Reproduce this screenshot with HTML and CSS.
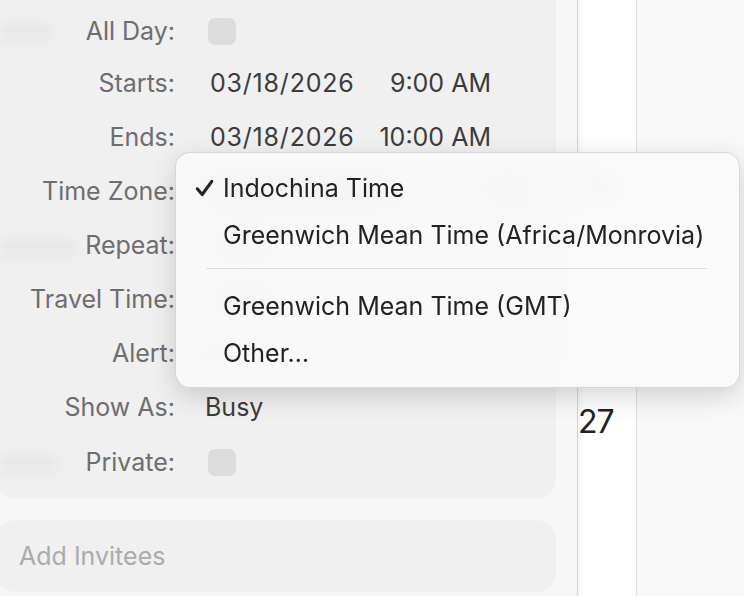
FILE: index.html
```html
<!DOCTYPE html>
<html lang="en">
<head>
    <meta charset="UTF-8">
    <meta name="viewport" content="width=device-width, initial-scale=1.0">
    <title>Event Details</title>
    <link rel="stylesheet" href="styles.css">
</head>
<body>

<!-- Event inspector -->
<div class="sidebar">
    <div class="card details">
        <span class="ghost ghost-1"></span>
        <span class="ghost ghost-2"></span>
        <span class="ghost ghost-3"></span>

        <div class="row row-first">
            <span class="label">All Day:</span>
            <span class="checkbox"></span>
        </div>
        <div class="row">
            <span class="label">Starts:</span>
            <span class="value date">03/18/2026</span>
            <span class="value time">9:00 AM</span>
        </div>
        <div class="row">
            <span class="label">Ends:</span>
            <span class="value date">03/18/2026</span>
            <span class="value time">10:00 AM</span>
        </div>
        <div class="row">
            <span class="label">Time Zone:</span>
            <span class="popup-button"><span class="blur-text wide"></span><span class="stepper"></span></span>
        </div>
        <div class="row">
            <span class="label">Repeat:</span>
            <span class="blur-text short"></span>
        </div>
        <div class="row">
            <span class="label">Travel Time:</span>
            <span class="blur-text short"></span>
        </div>
        <div class="row">
            <span class="label">Alert:</span>
            <span class="popup-small"></span>
        </div>
        <div class="row">
            <span class="label">Show As:</span>
            <span class="value busy">Busy</span>
        </div>
        <div class="row row-last">
            <span class="label">Private:</span>
            <span class="checkbox"></span>
        </div>
    </div>

    <div class="card invitees">
        <span class="placeholder">Add Invitees</span>
    </div>
</div>

<!-- Calendar day column -->
<div class="day-column">
    <span class="day-blur"></span>
    <span class="day-number">27</span>
</div>

<div class="calendar-rest"></div>

<!-- Time zone pop-up menu -->
<div class="menu">
    <div class="menu-item">
        <svg class="check" width="19" height="18" viewBox="0 0 19 18">
            <path d="M2.3 9.8 L7.2 15.5 L16.8 2.3" fill="none" stroke="#222222" stroke-width="3.1" stroke-linecap="round" stroke-linejoin="round"/>
        </svg>
        <span>Indochina Time</span>
    </div>
    <div class="menu-item">
        <span class="check"></span>
        <span>Greenwich Mean Time (Africa/Monrovia)</span>
    </div>
    <div class="menu-separator"></div>
    <div class="menu-item">
        <span class="check"></span>
        <span>Greenwich Mean Time (GMT)</span>
    </div>
    <div class="menu-item">
        <span class="check"></span>
        <span>Other…</span>
    </div>
</div>

</body>
</html>
```

FILE: styles.css
```css
html, body {
    height: 100%;
    margin: 0;
    overflow: hidden;
}

body {
    display: flex;
    background-color: #f7f7f7;
    font-family: Inter, "Noto Sans", sans-serif;
    font-size: 25px;
    color: #3c3c3c;
}

/* Inspector column */
.sidebar {
    width: 578px;
    flex: none;
    display: flex;
    flex-direction: column;
    gap: 21px;
    padding-right: 21px;
    box-sizing: border-box;
    background-color: #f7f7f7;
    border-right: 1px solid #d4d4d4;
    box-shadow: 2px 0 6px rgba(0, 0, 0, 0.05);
    position: relative;
    z-index: 1;
}

.card {
    margin-left: -4px;
    background-color: #f0f0f0;
    border-radius: 20px;
}

.details {
    position: relative;
    margin-top: -20px;
    padding: 26px 0 9px 0;
}

.row {
    display: flex;
    align-items: center;
    height: 54px;
}

.row-first {
    height: 50px;
}

.row-last {
    height: 56px;
}

.label {
    width: 179px;
    flex: none;
    text-align: right;
    color: #6e6e6e;
}

.value {
    color: #3c3c3c;
}

.date {
    margin-left: 35px;
    width: 142px;
    letter-spacing: 0.8px;
}

.time {
    width: 139px;
    text-align: right;
}

.busy {
    margin-left: 30px;
}

.checkbox {
    margin-left: 33px;
    width: 28px;
    height: 27px;
    border-radius: 7px;
    background-color: #dcdcdc;
}

/* Controls that sit under the open menu */
.popup-button {
    margin-left: 10px;
    width: 345px;
    height: 44px;
    padding-left: 30px;
    box-sizing: border-box;
    display: flex;
    align-items: center;
    justify-content: space-between;
    border-radius: 9px;
    background-color: #e2e2e2;
}

.stepper {
    width: 22px;
    height: 36px;
    margin-right: 4px;
    border-radius: 6px;
    background-color: #c9c9c9;
}

.blur-text {
    height: 14px;
    border-radius: 7px;
    background-color: #9a9a9a;
}

.blur-text.wide {
    width: 170px;
}

.blur-text.short {
    margin-left: 40px;
    width: 56px;
}

.popup-small {
    margin-left: 10px;
    width: 80px;
    height: 38px;
    border-radius: 8px;
    background-color: #dedede;
}

/* faint marks at the left edge of the card */
.ghost {
    position: absolute;
    left: 2px;
    height: 14px;
    border-radius: 7px;
    background-color: #e5e5e5;
    filter: blur(7px);
}

.ghost-1 { top: 46px; width: 56px; }
.ghost-2 { top: 262px; width: 80px; }
.ghost-3 { top: 478px; width: 60px; }

.invitees {
    height: 72px;
    display: flex;
    align-items: center;
    padding-left: 23px;
}

.placeholder {
    color: #ababab;
}

/* Calendar */
.day-column {
    width: 58px;
    flex: none;
    display: flex;
    flex-direction: column;
    padding-top: 174px;
    gap: 204px;
    background-color: #fefefe;
    border-right: 1px solid #e0e0e0;
}

.day-blur {
    width: 32px;
    height: 24px;
    margin-left: 4px;
    border-radius: 6px;
    background-color: #bdbdbd;
}

.day-number {
    font-size: 32px;
    line-height: 40px;
    letter-spacing: -1px;
    color: #222222;
}

.calendar-rest {
    flex: 1;
    background-color: #f8f8f8;
}

/* Pop-up menu */
.menu {
    position: absolute;
    left: 175px;
    top: 152px;
    width: 565px;
    box-sizing: border-box;
    padding: 11px 0 11px 0;
    border: 1px solid rgba(0, 0, 0, 0.14);
    border-radius: 15px;
    background-color: rgba(250, 250, 250, 0.9);
    backdrop-filter: blur(14px);
    box-shadow: 0 8px 26px rgba(0, 0, 0, 0.16);
    z-index: 2;
    color: #222222;
}

.menu-item {
    display: flex;
    align-items: center;
    height: 47px;
    padding-left: 19px;
}

.check {
    width: 19px;
    height: 18px;
    margin-right: 9px;
    flex: none;
}

.menu-separator {
    height: 1px;
    margin: 10px 32px 13px 30px;
    background-color: #dedede;
}
```
